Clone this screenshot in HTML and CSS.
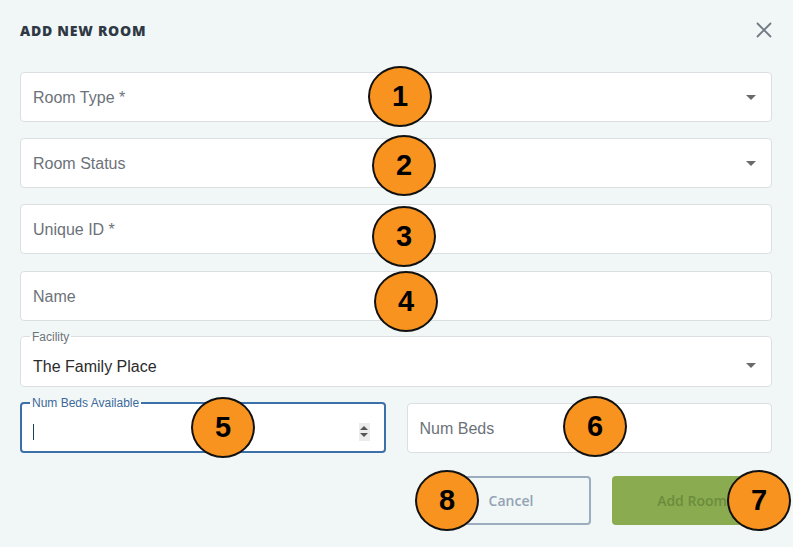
FILE: index.html
```html
<!DOCTYPE html>
<html>
<head>
<meta charset="utf-8">
<link rel="stylesheet" href="styles.css">
</head>
<body>
<div class="dialog">
  <div class="header">
    <h1 class="title">ADD NEW ROOM</h1>
    <svg class="close" width="16" height="16" viewBox="0 0 16 16"><path d="M1 1L15 15M15 1L1 15" stroke="#6f7a82" stroke-width="1.8" fill="none"/></svg>
  </div>
  <div class="form">
    <div class="field select"><span class="placeholder">Room Type *</span><span class="caret-down"></span></div>
    <div class="field select"><span class="placeholder">Room Status</span><span class="caret-down"></span></div>
    <div class="field"><span class="placeholder">Unique ID *</span></div>
    <div class="field"><span class="placeholder">Name</span></div>
    <fieldset class="outlined">
      <legend>Facility</legend>
      <div class="value-row"><span class="value">The Family Place</span><span class="caret-down"></span></div>
    </fieldset>
    <div class="pair">
      <fieldset class="outlined focused">
        <legend>Num Beds Available</legend>
        <div class="value-row"><span class="text-caret"></span><span class="spinner"><span class="up"></span><span class="down"></span></span></div>
      </fieldset>
      <div class="field"><span class="placeholder">Num Beds</span></div>
    </div>
    <div class="actions">
      <button class="btn cancel">Cancel</button>
      <button class="btn add">Add Room</button>
    </div>
  </div>
</div>
<div class="marker m1">1</div>
<div class="marker m2">2</div>
<div class="marker m3">3</div>
<div class="marker m4">4</div>
<div class="marker m5">5</div>
<div class="marker m6">6</div>
<div class="marker m7">7</div>
<div class="marker m8">8</div>
</body>
</html>
```
FILE: styles.css
```css
html, body {
  margin: 0;
  padding: 0;
  background: #f1f6f7;
  width: 793px;
  height: 547px;
  overflow: hidden;
}
body {
  position: relative;
  font-family: "Liberation Sans", Arial, sans-serif;
}
.dialog {
  padding: 20px 21px 0 20px;
}
.header {
  height: 20px;
  display: flex;
  align-items: center;
  justify-content: space-between;
}
.title {
  margin: 0;
  font-family: "Open Sans", sans-serif;
  font-weight: 800;
  font-size: 14px;
  letter-spacing: 0.75px;
  color: #2e3944;
}
.close {
  display: block;
}
.form {
  margin-top: 32px;
  display: flex;
  flex-direction: column;
  gap: 16.2px;
}
.field {
  box-sizing: border-box;
  height: 50px;
  background: #fff;
  border: 1px solid #dcdfe2;
  border-radius: 4px;
  display: flex;
  align-items: center;
  justify-content: space-between;
  padding: 2px 15px 0 12px;
}
.placeholder {
  font-size: 16px;
  color: #6c7279;
}
.caret-down {
  width: 0;
  height: 0;
  border-left: 5px solid transparent;
  border-right: 5px solid transparent;
  border-top: 5px solid #6a6a6a;
  margin-top: -1px;
}
.outlined {
  margin: -7px 0 0 0;
  padding: 0 15px 0 12px;
  background: #fff;
  border: 1px solid #dcdfe2;
  border-radius: 4px;
  min-width: 0;
}
.outlined legend {
  font-size: 12px;
  line-height: 14px;
  color: #6c7279;
  padding: 0 2px;
  margin-left: -3px;
}
.value-row {
  box-sizing: border-box;
  height: 42px;
  padding-top: 4px;
  display: flex;
  align-items: center;
  justify-content: space-between;
}
.value-row .caret-down {
  margin-top: -2px;
}
.value {
  font-size: 16px;
  color: #2b2b2b;
}
.pair {
  display: grid;
  grid-template-columns: 1fr 1fr;
  gap: 21px;
}
.focused {
  border: 2px solid #3c70a8;
  padding: 0 14px 0 11px;
}
.focused legend {
  color: #3c6a9a;
}
.focused .value-row {
  height: 40px;
}
.text-caret {
  width: 1px;
  height: 16px;
  background: #1d3c5e;
}
.spinner {
  width: 11px;
  height: 18px;
  background: #ececec;
  display: flex;
  flex-direction: column;
  align-items: center;
  justify-content: center;
  gap: 3px;
}
.spinner .up {
  width: 0;
  height: 0;
  border-left: 4px solid transparent;
  border-right: 4px solid transparent;
  border-bottom: 4px solid #555;
}
.spinner .down {
  width: 0;
  height: 0;
  border-left: 4px solid transparent;
  border-right: 4px solid transparent;
  border-top: 4px solid #555;
}
.actions {
  display: flex;
  justify-content: flex-end;
  gap: 21px;
  margin-top: 6.5px;
}
.btn {
  box-sizing: border-box;
  width: 160px;
  height: 49px;
  border-radius: 4px;
  font-family: "Open Sans", sans-serif;
  font-weight: 600;
  font-size: 14px;
  padding: 0;
}
.cancel {
  background: transparent;
  border: 2px solid #9badbf;
  color: #93a3b4;
}
.add {
  background: #8aab50;
  border: none;
  color: #6c8b3d;
}
.marker {
  position: absolute;
  width: 60px;
  height: 57px;
  border: 2px solid #111;
  border-radius: 50%;
  background: #f7931e;
  color: #000;
  font-family: "Liberation Sans", Arial, sans-serif;
  font-weight: 700;
  font-size: 29px;
  display: flex;
  align-items: center;
  justify-content: center;
}
.m1 { left: 368px; top: 66px; }
.m2 { left: 372px; top: 135px; }
.m3 { left: 372px; top: 206px; }
.m4 { left: 374px; top: 271px; }
.m5 { left: 191px; top: 397px; }
.m6 { left: 563px; top: 396px; }
.m7 { left: 727px; top: 470px; }
.m8 { left: 415px; top: 470px; }
```
